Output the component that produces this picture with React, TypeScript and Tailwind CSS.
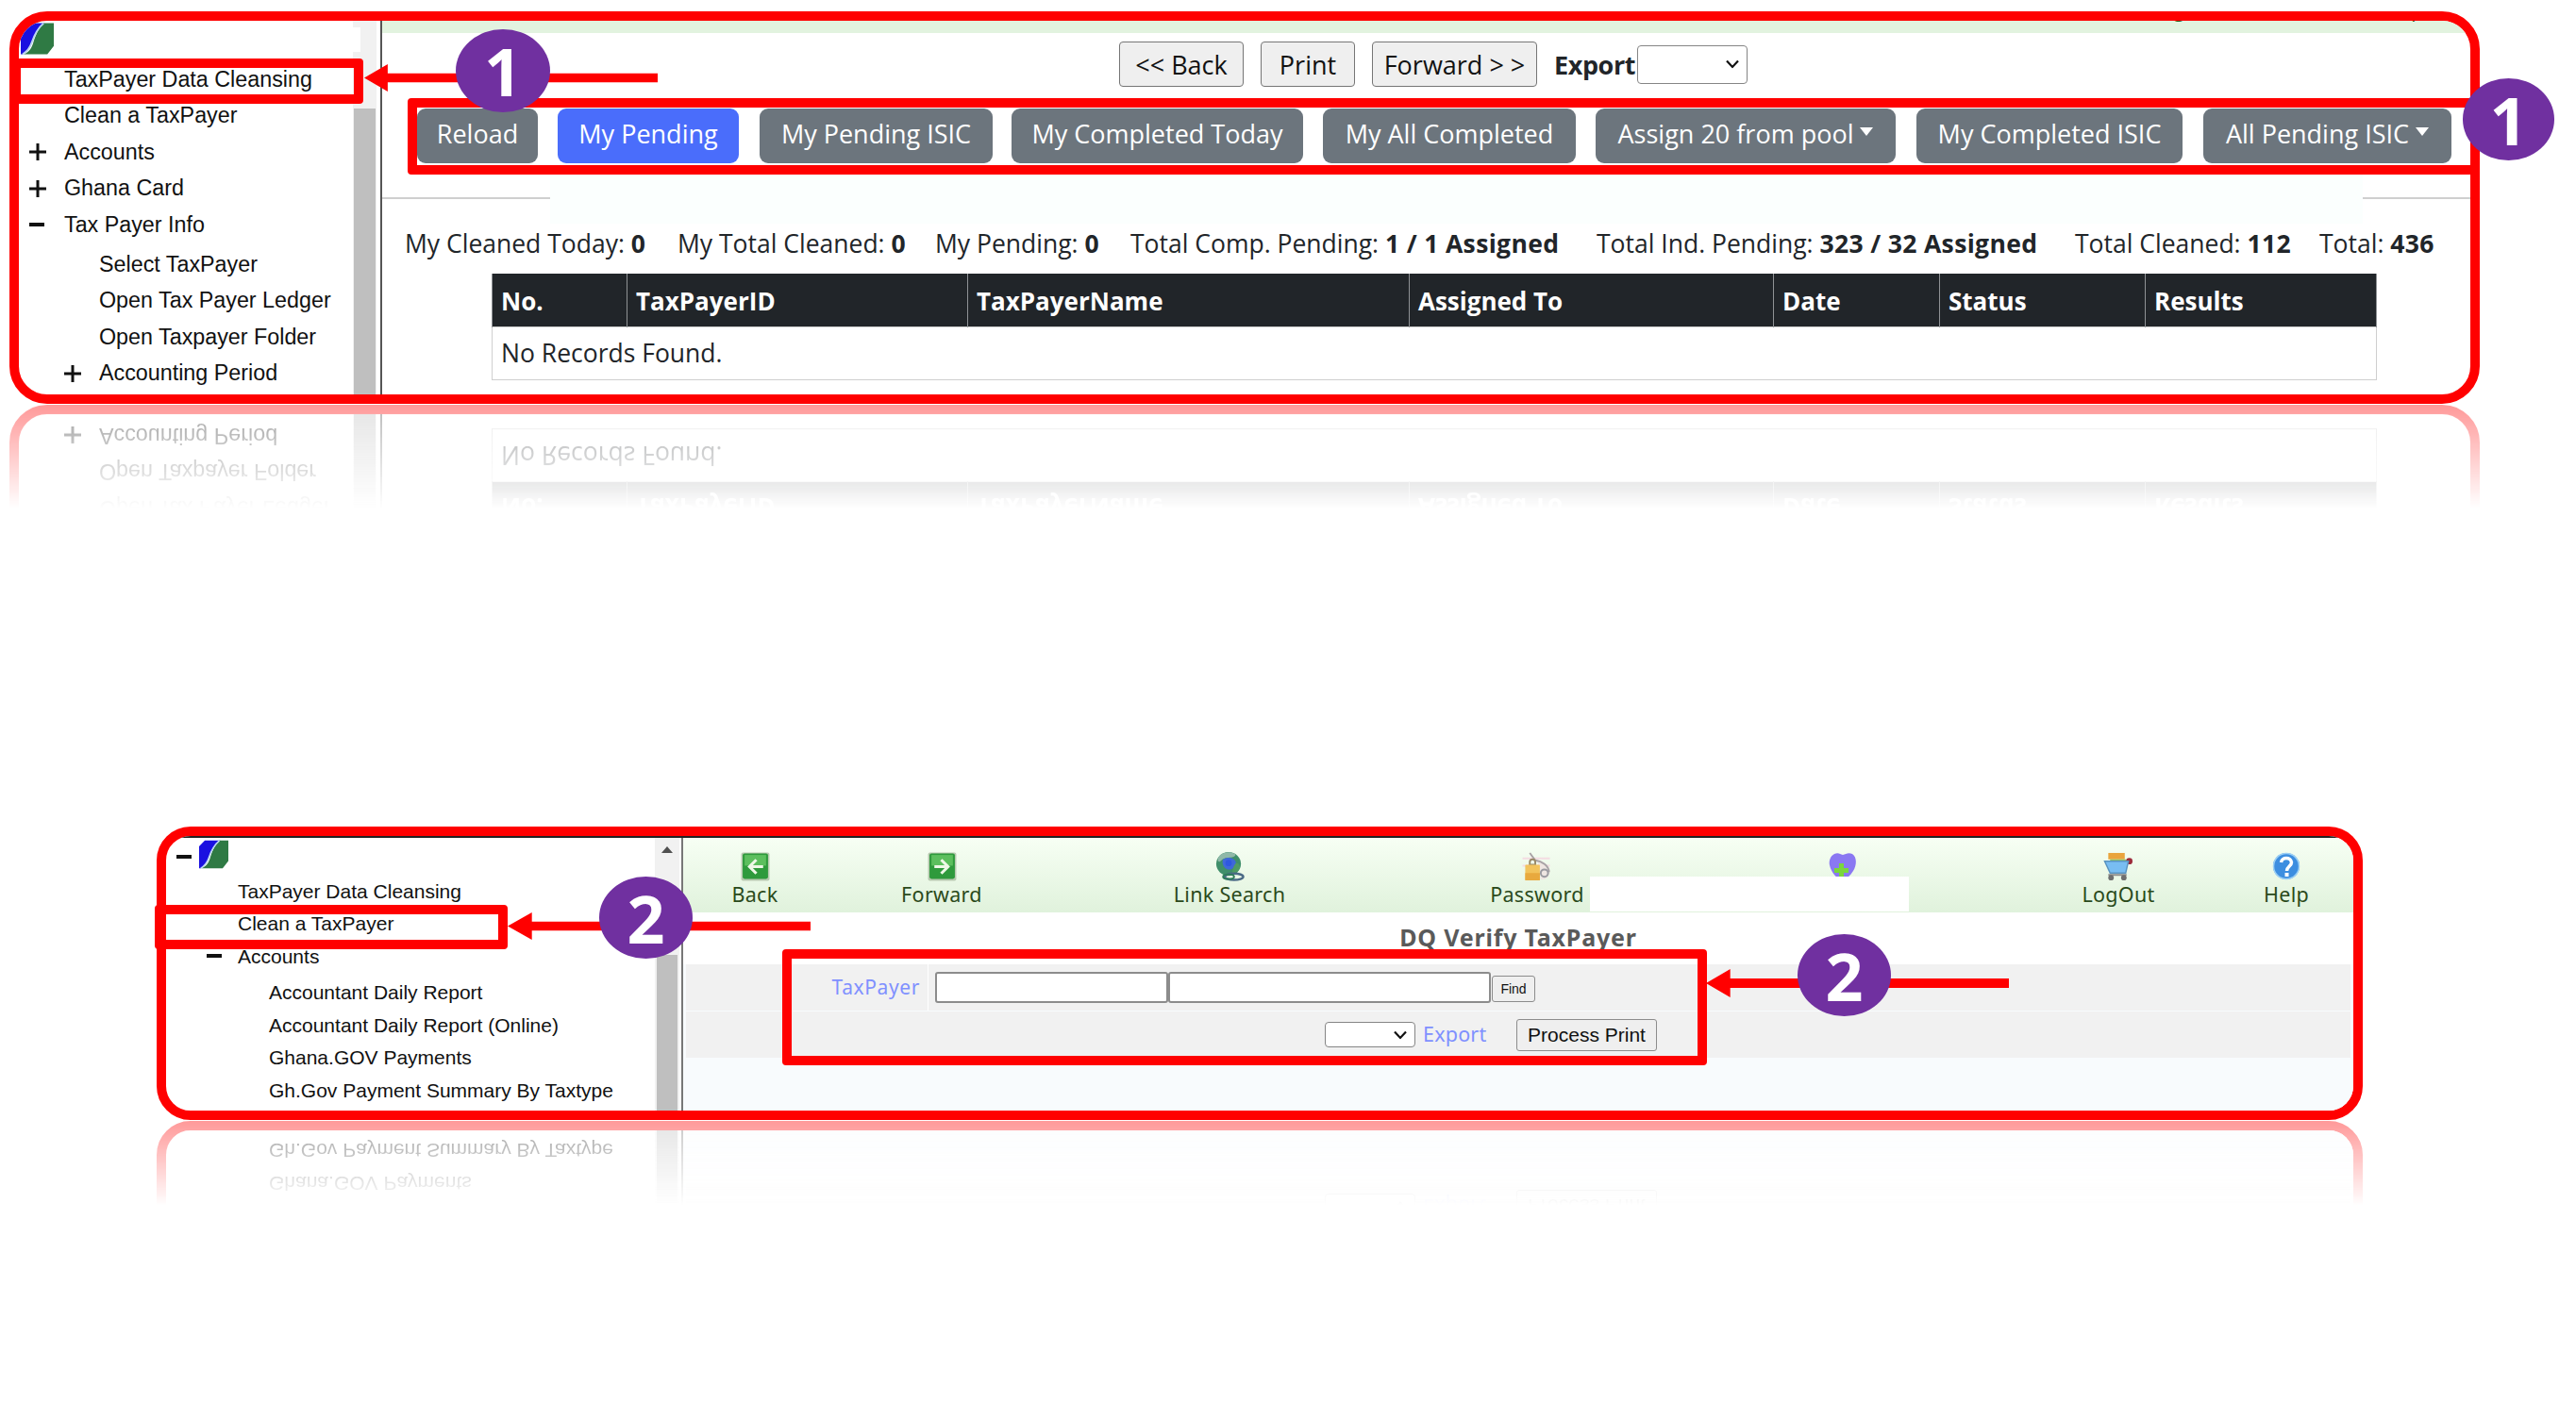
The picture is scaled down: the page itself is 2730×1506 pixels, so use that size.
import type { ReactNode } from "react";

const open = "font-['Open_Sans',sans-serif]";
const arial = "font-['Liberation_Sans',sans-serif]";
const noto = "font-['Noto_Sans',sans-serif]";

function Logo({ className }: { className: string }) {
  return (
    <svg viewBox="0 0 36 34" className={className}>
      <path d="M7 0H26C18 6 15 12 12 21C10 27 7 31 2 34H0V7Z" fill="#1a10e0" />
      <path d="M25 0H36V25L29 34H3C10 31 12 27 14 20C17 11 20 5 25 0Z" fill="#2f7a44" />
      <path d="M25 0C18 6 15 12 12 21C10 27 7 31 2 34" fill="none" stroke="#b9d4f0" strokeWidth="1.8" />
    </svg>
  );
}

function Plus() {
  return (
    <svg viewBox="0 0 20 20" className="w-5 h-5">
      <path d="M10 1V19M1 10H19" stroke="#111" strokeWidth="3" />
    </svg>
  );
}

function Minus() {
  return <span className="block w-[16px] h-[4px] mx-px bg-[#111]" />;
}

function Dropdown({ className }: { className: string }) {
  return (
    <div className={`relative ${className}`}>
      <select className="block w-full h-full appearance-none bg-white border border-[#858585] rounded-[4px]" />
      <svg viewBox="0 0 14 9" className="absolute right-[9px] top-1/2 -translate-y-1/2 w-[14px] h-[9px]">
        <path d="M1 1L7 7.5L13 1" fill="none" stroke="#111" strokeWidth="2.2" />
      </svg>
    </div>
  );
}

type TreeRow = { label: string; icon?: "plus" | "minus"; child?: boolean; gapTop?: boolean };

const treeOne: TreeRow[] = [
  { label: "TaxPayer Data Cleansing" },
  { label: "Clean a TaxPayer" },
  { label: "Accounts", icon: "plus" },
  { label: "Ghana Card", icon: "plus" },
  { label: "Tax Payer Info", icon: "minus" },
  { label: "Select TaxPayer", child: true, gapTop: true },
  { label: "Open Tax Payer Ledger", child: true },
  { label: "Open Taxpayer Folder", child: true },
  { label: "Accounting Period", icon: "plus", child: true },
];

const treeTwo: TreeRow[] = [
  { label: "TaxPayer Data Cleansing" },
  { label: "Clean a TaxPayer" },
  { label: "Accounts", icon: "minus" },
  { label: "Accountant Daily Report", child: true, gapTop: true },
  { label: "Accountant Daily Report (Online)", child: true },
  { label: "Ghana.GOV Payments", child: true },
  { label: "Gh.Gov Payment Summary By Taxtype", child: true },
];

const tabs = [
  { label: "Reload", w: "w-[128px] ml-[37px]" },
  { label: "My Pending", w: "w-[192px] ml-[21px]", active: true },
  { label: "My Pending ISIC", w: "w-[247px] ml-[22px]" },
  { label: "My Completed Today", w: "w-[309px] ml-[20px]" },
  { label: "My All Completed", w: "w-[268px] ml-[21px]" },
  { label: "Assign 20 from pool", w: "w-[318px] ml-[21px]", caret: true },
  { label: "My Completed ISIC", w: "w-[282px] ml-[22px]" },
  { label: "All Pending ISIC", w: "w-[263px] ml-[22px]", caret: true },
];

const stats = [
  { w: "w-[289px]", label: "My Cleaned Today:", value: "0" },
  { w: "w-[273px]", label: "My Total Cleaned:", value: "0" },
  { w: "w-[207px]", label: "My Pending:", value: "0" },
  { w: "w-[494px]", label: "Total Comp. Pending:", value: "1 / 1 Assigned" },
  { w: "w-[507px]", label: "Total Ind. Pending:", value: "323 / 32 Assigned" },
  { w: "w-[259px]", label: "Total Cleaned:", value: "112" },
  { w: "w-[122px]", label: "Total:", value: "436" },
];

const columns = [
  { label: "No.", w: "w-[143px]" },
  { label: "TaxPayerID", w: "w-[361px]" },
  { label: "TaxPayerName", w: "w-[468px]" },
  { label: "Assigned To", w: "w-[386px]" },
  { label: "Date", w: "w-[176px]" },
  { label: "Status", w: "w-[218px]" },
  { label: "Results", w: "w-[245px]" },
];

function ArrowTile({ flip }: { flip?: boolean }) {
  return (
    <svg viewBox="0 0 30 30" className="w-[31px] h-[31px]">
      <rect x="0.5" y="0.5" width="29" height="29" rx="2" fill="#b8c9b0" />
      <rect x="2" y="1.5" width="26" height="26" rx="2" fill="#2e9a3c" />
      <rect x="4" y="3" width="22" height="11" fill="#5cbf5e" />
      <path
        d={flip ? "M7 15H19M14 8L21 15L14 22" : "M23 15H11M16 8L9 15L16 22"}
        fill="none"
        stroke="#eef8e8"
        strokeWidth="3"
      />
    </svg>
  );
}

function Globe() {
  return (
    <svg viewBox="0 0 32 32" className="w-[32px] h-[31px]">
      <ellipse cx="15" cy="13" rx="13.5" ry="13" fill="#3f8f6a" />
      <path d="M5 4C9 0 17 -1 22 2C24 4 20 6 17 6C13 6 9 7 6 10C3 12 2 8 5 4Z" fill="#8fb8a8" />
      <path d="M9 8C14 5 21 6 23 11C23 16 19 20 14 19C10 18 7 12 9 8Z" fill="#3f68d8" />
      <circle cx="15" cy="12" r="3.5" fill="#2f58e0" />
      <path d="M23 12C26 12 28 14 27 18C25 22 22 24 19 24C19 20 20 15 23 12Z" fill="#4f9b62" />
      <ellipse cx="21" cy="27" rx="10" ry="3.5" fill="none" stroke="#4b6a86" strokeWidth="2.5" />
      <ellipse cx="15" cy="27" rx="6" ry="2.5" fill="none" stroke="#2e7d5a" strokeWidth="2" />
    </svg>
  );
}

function PasswordIcon() {
  return (
    <svg viewBox="0 0 32 32" className="w-[32px] h-[31px]">
      <path d="M0 7H30M0 15H30" stroke="#f4dce2" strokeWidth="2" />
      <path d="M8 0L14 8C22 9 30 14 30 22C29 28 25 31 20 30L17 12L9 5Z" fill="#efe6e2" />
      <path d="M8 1L14 9C21 10 29 15 29 22" fill="none" stroke="#a8a3a6" strokeWidth="2" />
      <circle cx="24" cy="23" r="4" fill="none" stroke="#9a9aa0" strokeWidth="2" />
      <path d="M8 11C8 7 14 7 14 11V14H8Z" fill="none" stroke="#9a8a6a" strokeWidth="2" />
      <rect x="3" y="14" width="16" height="17" rx="1" fill="#f2c35c" />
      <rect x="3" y="23" width="16" height="8" fill="#e8a93e" />
    </svg>
  );
}

function HeartPlus() {
  return (
    <svg viewBox="0 0 30 30" className="w-[30px] h-[30px]">
      <path d="M6 2C10 0 12 2 15 3C18 2 21 0 25 2C30 5 30 14 26 20C23 25 19 28 15 30C8 28 3 22 1 14C0 9 2 4 6 2Z" fill="#8a78f2" />
      <path d="M6 17H11V12H16V17H21V22H16V27H11V22H6Z" fill="#7ad63c" />
    </svg>
  );
}

function Cart() {
  return (
    <svg viewBox="0 0 32 32" className="w-[32px] h-[31px]">
      <rect x="5" y="1" width="18" height="7" fill="#e9a43c" />
      <rect x="7" y="8" width="18" height="5" fill="#8fc46a" />
      <circle cx="28" cy="10" r="3.5" fill="#9c2a3a" />
      <path d="M1 10H27L24 23H7Z" fill="#78bdf2" stroke="#5a93bf" strokeWidth="1.5" />
      <path d="M5 25H25" stroke="#8c8c8c" strokeWidth="2" />
      <circle cx="8" cy="28" r="3" fill="#6f6f6f" />
      <circle cx="22" cy="28" r="3" fill="#6f6f6f" />
    </svg>
  );
}

function HelpIcon() {
  return (
    <svg viewBox="0 0 30 30" className="w-[30px] h-[30px]">
      <circle cx="15" cy="15" r="14" fill="#3d8ee0" />
      <circle cx="15" cy="15" r="13.5" fill="none" stroke="#9cd0f5" strokeWidth="1.5" />
      <path d="M9.5 11C10 5 20 5 20.5 11C20.5 15 15.5 15 15.5 20" fill="none" stroke="#fff" strokeWidth="3.5" />
      <rect x="13.5" y="22" width="4" height="4" fill="#fff" />
    </svg>
  );
}

const toolbar: { label: string; w: string; icon: ReactNode }[] = [
  { label: "Back", w: "w-[152px]", icon: <ArrowTile /> },
  { label: "Forward", w: "w-[244px]", icon: <ArrowTile flip /> },
  { label: "Link Search", w: "w-[366px]", icon: <Globe /> },
  { label: "Password", w: "w-[286px]", icon: <PasswordIcon /> },
  { label: "", w: "w-[362px]", icon: <HeartPlus /> },
  { label: "LogOut", w: "w-[222px]", icon: <Cart /> },
  { label: "Help", w: "w-[134px]", icon: <HelpIcon /> },
];

function TopCard() {
  return (
    <div className="flex w-[2618px] h-[416px] border-[10px] border-[#ff0000] rounded-[40px] overflow-hidden bg-white">
      <div className="flex w-[385px] shrink-0 border-r-[2px] border-[#555]">
        <div className={`w-[354px] shrink-0 ${arial} text-[23.3px] text-[#111] leading-none`}>
          <div className="h-[43px] pl-[2px] pt-[2px]">
            <Logo className="w-[35px] h-[34px]" />
          </div>
          {treeOne.map((row) => (
            <div
              key={row.label}
              className={`flex items-center h-[38.5px] ${row.child ? "pl-[47px]" : "pl-[10px]"} ${row.gapTop ? "mt-[3.5px]" : ""}`}
            >
              <span className="w-[38px] shrink-0">
                {row.icon === "plus" ? <Plus /> : row.icon === "minus" ? <Minus /> : null}
              </span>
              <span className="whitespace-nowrap">{row.label}</span>
            </div>
          ))}
        </div>
        <div className="flex flex-col w-[25px] shrink-0 bg-[#f1f1f1]">
          <div className="h-[93px]" />
          <div className="flex-1 mx-px bg-[#bfbfbf]" />
        </div>
      </div>
      <div className={`flex-1 min-w-0 ${open} text-[#212529]`}>
        <div className="flex h-[13px] bg-[#e2f3df] overflow-hidden text-[#2b5a1b] text-[21px] leading-none">
          <span className="ml-[1875px] -mt-[22px]">LogOut</span>
          <span className="ml-[171px] -mt-[22px]">Help</span>
        </div>
        <div className="flex items-center h-[48px] mt-[9px] pl-[781px] gap-[18px] text-[#111] text-[27px]">
          <button className="w-[132px] h-full pt-[2px] bg-[#efefef] border border-[#767676] rounded-[4px]">&lt;&lt; Back</button>
          <button className="w-[100px] h-full pt-[2px] bg-[#efefef] border border-[#767676] rounded-[4px]">Print</button>
          <button className="w-[175px] h-full pt-[2px] bg-[#efefef] border border-[#767676] rounded-[4px]">Forward &gt; &gt;</button>
          <span className="w-[88px] pt-[2px] font-bold text-[#212529] tracking-[-0.4px] whitespace-nowrap">Export</span>
          <Dropdown className="-ml-[18px] w-[117px] h-[41px]" />
        </div>
        <div className="flex h-[58px] mt-[23px] text-[27px] text-white">
          {tabs.map((t) => (
            <button
              key={t.label}
              className={`flex items-center justify-center gap-[7px] shrink-0 h-full pb-[3px] rounded-[9px] ${t.w} ${t.active ? "bg-[#4a6dfb]" : "bg-[#6c757d]"}`}
            >
              {t.label}
              {t.caret && <span className="w-0 h-0 mb-[6px] border-x-[7px] border-t-[9px] border-x-transparent border-t-white" />}
            </button>
          ))}
        </div>
        <div className="h-[2px] mt-[36px] bg-[#cfcfcf]" />
        <div className="flex items-center h-[36px] mt-[30px] pl-[24px] text-[26.5px] whitespace-nowrap">
          {stats.map((s) => (
            <span key={s.label} className={`shrink-0 ${s.w}`}>
              {s.label} <b className="tracking-[0.35px]">{s.value}</b>
            </span>
          ))}
        </div>
        <table className="table-fixed w-[1997px] mt-[13px] ml-[116px] text-[26px] border-collapse">
          <thead>
            <tr className="h-[56px] bg-[#212529] text-white">
              {columns.map((c) => (
                <th key={c.label} className={`${c.w} pl-[9px] pt-[3px] text-left font-bold border-x border-[#8f9295]`}>
                  {c.label}
                </th>
              ))}
            </tr>
          </thead>
          <tbody>
            <tr className="h-[56px]">
              <td colSpan={7} className="pl-[9px] pt-[2px] text-[26.5px] border border-[#cfcfcf]">
                No Records Found.
              </td>
            </tr>
          </tbody>
        </table>
      </div>
    </div>
  );
}

function BottomCard() {
  return (
    <div className="flex w-[2338px] h-[311px] border-[10px] border-[#ff0000] rounded-[36px] overflow-hidden bg-white">
      <div className="flex flex-col flex-1 min-w-0 border-t-[2px] border-[#222]">
        <div className="flex flex-1 min-h-0">
          <div className="flex w-[548px] shrink-0 border-r-[2px] border-[#777]">
            <div className={`w-[518px] shrink-0 ${arial} text-[21px] text-[#111] leading-none`}>
              <div className="flex items-center h-[39px] pl-[10px]">
                <Minus />
                <Logo className="w-[31px] h-[31px] ml-[7px] -mt-[4px]" />
              </div>
              {treeTwo.map((row) => (
                <div
                  key={row.label}
                  className={`flex items-center h-[34.5px] ${row.child ? "pl-[75px]" : "pl-[42px]"} ${row.gapTop ? "mt-[4px]" : ""}`}
                >
                  <span className="w-[34px] shrink-0">{row.icon === "minus" ? <Minus /> : null}</span>
                  <span className="whitespace-nowrap">{row.label}</span>
                </div>
              ))}
            </div>
            <div className="flex flex-col w-[26px] shrink-0 bg-[#f1f1f1]">
              <div className="flex justify-center h-[124px] pt-[9px]">
                <span className="w-0 h-0 border-x-[6px] border-b-[7px] border-x-transparent border-b-[#505050]" />
              </div>
              <div className="flex-1 mx-[2px] bg-[#bfbfbf]" />
            </div>
          </div>
          <div className={`flex flex-col flex-1 min-w-0 ${noto}`}>
            <div className="flex h-[79px] bg-gradient-to-b from-[#f7fff4] to-[#e0f2dc]">
              {toolbar.map((t, i) => (
                <div key={i} className={`flex flex-col items-center shrink-0 ${t.w} pt-[15px] text-[21.5px] tracking-[0.3px] leading-[28px] text-[#2b4a1b]`}>
                  <span className="h-[31px]">{t.icon}</span>
                  <span>{t.label}</span>
                </div>
              ))}
            </div>
            <div className="flex items-center justify-center h-[55px] text-[25px] font-bold text-[#5a5a5a]">
              <span className="-mt-[1px] tracking-[0.8px]">DQ Verify TaxPayer</span>
            </div>
            <div className="flex flex-col flex-1 bg-[#f8fbfd]">
              <div className="flex items-center h-[49px] mx-[3px] bg-[#f1f1f1]">
                <div className="flex items-center justify-end w-[257px] h-full pr-[8px] border-r border-white text-[21px] tracking-[0.6px] text-[#7f90ff]">
                  TaxPayer
                </div>
                <input className="w-[247px] h-[33px] ml-[7px] bg-white border-2 border-[#8c8c8c] rounded-[3px]" />
                <input className="w-[342px] h-[33px] bg-white border-2 border-[#8c8c8c] rounded-[3px]" />
                <button className={`w-[46px] h-[28px] ml-px mt-[3px] bg-[#efefef] border border-[#8c8c8c] rounded-[3px] ${arial} text-[14px] text-[#111]`}>
                  Find
                </button>
              </div>
              <div className="flex items-center h-[49px] mt-px mx-[3px] pl-[677px] bg-[#f1f1f1]">
                <Dropdown className="w-[96px] h-[27px]" />
                <span className="w-[107px] pl-[8px] text-[21.5px] tracking-[0.2px] text-[#7f90ff]">Export</span>
                <button className={`w-[149px] h-[34px] bg-[#efefef] border border-[#8c8c8c] rounded-[3px] ${arial} text-[21px] text-[#111]`}>
                  Process Print
                </button>
              </div>
              <div className="flex-1" />
            </div>
          </div>
        </div>
      </div>
    </div>
  );
}

function Reflection({ children, size }: { children: ReactNode; size: string }) {
  return (
    <div aria-hidden className={`overflow-hidden blur-[0.7px] opacity-40 [mask-image:linear-gradient(to_bottom,black,transparent)] ${size}`}>
      <div className="-scale-y-100">{children}</div>
    </div>
  );
}

function Callout({ num, className }: { num: string; className: string }) {
  return (
    <div className={`absolute flex items-center justify-center rounded-[50%] bg-[#7030a0] text-white ${open} text-[70px] font-bold leading-none ${className}`}>
      {num}
    </div>
  );
}

function Arrow({ className }: { className: string }) {
  return (
    <svg viewBox="0 0 100 30" preserveAspectRatio="none" className={`absolute ${className}`}>
      <path d="M0 15L8 0V10H100V20H8V30Z" fill="#ff0000" />
    </svg>
  );
}

export default function App() {
  return (
    <div className="relative w-[2730px] h-[1506px] bg-white overflow-hidden">
      <div className="ml-[10px] pt-[12px]">
        <TopCard />
        <Reflection size="w-[2618px] h-[110px] mt-[1px]">
          <TopCard />
        </Reflection>
      </div>
      <div className="ml-[166px] mt-[337px]">
        <BottomCard />
        <Reflection size="w-[2338px] h-[90px] mt-[1px]">
          <BottomCard />
        </Reflection>
      </div>

      {/* callouts drawn over the screenshots */}
      <div className="absolute left-[372px] top-[29px] w-[10px] h-[26px] bg-white" />
      <div className="absolute left-[583px] top-[185px] w-[1921px] h-[52px] bg-[#fbfffe]" />
      <div className="absolute left-[12px] top-[62px] w-[373px] h-[48px] border-[10px] border-[#ff0000] rounded-[4px]" />
      <div className="absolute left-[432px] top-[104px] w-[2196px] h-[81px] border-[10px] border-[#ff0000] rounded-[4px]" />
      <Arrow className="left-[386px] top-[68px] w-[311px] h-[29px]" />
      <Callout num="1" className="left-[483px] top-[31px] w-[100px] h-[88px]" />
      <Callout num="1" className="left-[2610px] top-[83px] w-[97px] h-[87px]" />

      <div className="absolute left-[1685px] top-[929px] w-[338px] h-[37px] bg-white" />
      <div className="absolute left-[164px] top-[959px] w-[374px] h-[47px] border-[10px] border-[#ff0000] rounded-[4px]" />
      <div className="absolute left-[829px] top-[1006px] w-[980px] h-[123px] border-[10px] border-[#ff0000] rounded-[4px]" />
      <Arrow className="left-[538px] top-[967px] w-[321px] h-[29px]" />
      <Arrow className="left-[1808px] top-[1027px] w-[321px] h-[30px]" />
      <Callout num="2" className="left-[635px] top-[929px] w-[99px] h-[87px]" />
      <Callout num="2" className="left-[1905px] top-[990px] w-[99px] h-[87px]" />
    </div>
  );
}
